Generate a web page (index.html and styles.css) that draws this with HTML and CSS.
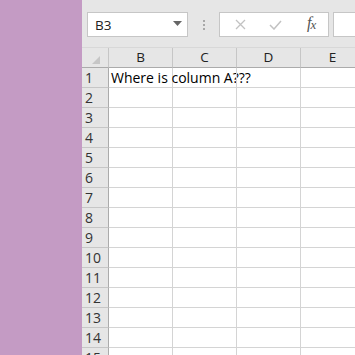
FILE: index.html
```html
<!DOCTYPE html>
<html lang="en">
<head>
    <meta charset="UTF-8">
    <title>Where is column A</title>
    <link rel="stylesheet" href="styles.css">
</head>
<body>
    <div class="desktop"></div>
    <div class="app">
        <!-- Formula bar -->
        <div class="toolbar">
            <div class="namebox">
                <span>B3</span>
                <svg class="caret" width="9" height="5" viewBox="0 0 9 5"><path d="M0 0h9L4.5 5z" fill="#666"/></svg>
            </div>
            <div class="grip"><i></i><i></i><i></i></div>
            <div class="fbuttons">
                <svg width="11" height="11" viewBox="0 0 11 11"><path d="M1 1l9 9M10 1l-9 9" stroke="#c2c2c2" stroke-width="1.3" fill="none"/></svg>
                <svg width="13" height="10" viewBox="0 0 13 10"><path d="M1 5l4 4 7-8" stroke="#c2c2c2" stroke-width="1.5" fill="none"/></svg>
                <span class="fx">f<sub>x</sub></span>
            </div>
            <div class="finput"></div>
        </div>

        <!-- Sheet -->
        <div class="sheet" id="sheet">
            <div class="corner"><span></span></div>
            <div class="colhead">B</div>
            <div class="colhead">C</div>
            <div class="colhead">D</div>
            <div class="colhead">E</div>
        </div>
    </div>

    <script>
        const sheet = document.getElementById('sheet');
        for (let r = 1; r <= 15; r++) {
            const head = document.createElement('div');
            head.className = 'rowhead';
            head.textContent = r;
            sheet.appendChild(head);
            for (let c = 0; c < 4; c++) {
                const cell = document.createElement('div');
                cell.className = 'cell';
                if (r === 1 && c === 0) cell.textContent = 'Where is column A???';
                sheet.appendChild(cell);
            }
        }
    </script>
</body>
</html>
```

FILE: styles.css
```css
body {
    margin: 0;
    height: 355px;
    overflow: hidden;
    display: flex;
    font-family: "Open Sans", "Liberation Sans", sans-serif;
    background: #fff;
}
.desktop {
    width: 82px;
    flex-shrink: 0;
    background-color: #c49bc4;
}
.app {
    flex: 1;
    min-width: 0;
    overflow: hidden;
    display: flex;
    flex-direction: column;
}
.toolbar {
    height: 47px;
    flex-shrink: 0;
    background: #e6e6e6;
    display: flex;
    align-items: flex-start;
    padding: 12px 0 0 5px;
    box-sizing: border-box;
}
.namebox {
    width: 101px;
    height: 25px;
    box-sizing: border-box;
    background: #fff;
    border: 1px solid #c6c6c6;
    display: flex;
    align-items: center;
    justify-content: space-between;
    padding: 0 5px 0 7px;
    font-size: 13.5px;
    color: #222;
}
.caret {
    margin-top: -2px;
}
.grip {
    width: 31px;
    height: 25px;
    display: flex;
    flex-direction: column;
    align-items: center;
    justify-content: center;
    gap: 2px;
}
.grip i {
    width: 2px;
    height: 2px;
    background: #a8a8a8;
}
.fbuttons {
    width: 110px;
    height: 25px;
    box-sizing: border-box;
    background: #fff;
    border: 1px solid #c6c6c6;
    display: flex;
    align-items: center;
    padding: 0 0 0 15px;
    gap: 25px;
}
.fbuttons svg:nth-child(2) {
    margin-left: -2px;
}
.fx {
    font-family: "Liberation Serif", serif;
    font-style: italic;
    font-size: 16px;
    color: #555;
    margin-left: 0;
    margin-top: -3px;
}
.fx sub {
    font-size: 13px;
    vertical-align: -1px;
    margin-left: -1px;
}
.finput {
    flex: 1;
    height: 25px;
    box-sizing: border-box;
    margin-left: 4px;
    background: #fff;
    border: 1px solid #c6c6c6;
    border-right: none;
}
.sheet {
    display: grid;
    grid-template-columns: 27px repeat(4, 64px);
    grid-auto-rows: 20px;
    border-top: 1px solid #d8d8d8;
}
.corner, .colhead, .rowhead {
    background: #e6e6e6;
    box-sizing: border-box;
    color: #222;
}
.corner {
    border-right: 1px solid #c6c6c6;
    border-bottom: 1px solid #ababab;
    position: relative;
}
.corner span {
    position: absolute;
    right: 8px;
    bottom: 3px;
    width: 0;
    height: 0;
    border-left: 8px solid transparent;
    border-bottom: 8px solid #c6c6c6;
}
.colhead {
    border-right: 1px solid #c6c6c6;
    border-bottom: 1px solid #ababab;
    font-size: 13.5px;
    text-align: center;
    line-height: 19px;
}
.rowhead {
    border-right: 1px solid #ababab;
    border-bottom: 1px solid #c6c6c6;
    font-size: 14px;
    padding-left: 3px;
    line-height: 19px;
    color: #333;
}
.cell {
    box-sizing: border-box;
    border-right: 1px solid #d4d4d4;
    border-bottom: 1px solid #d4d4d4;
    font-size: 14px;
    line-height: 19px;
    padding-left: 2px;
    white-space: nowrap;
    color: #000;
}
```
